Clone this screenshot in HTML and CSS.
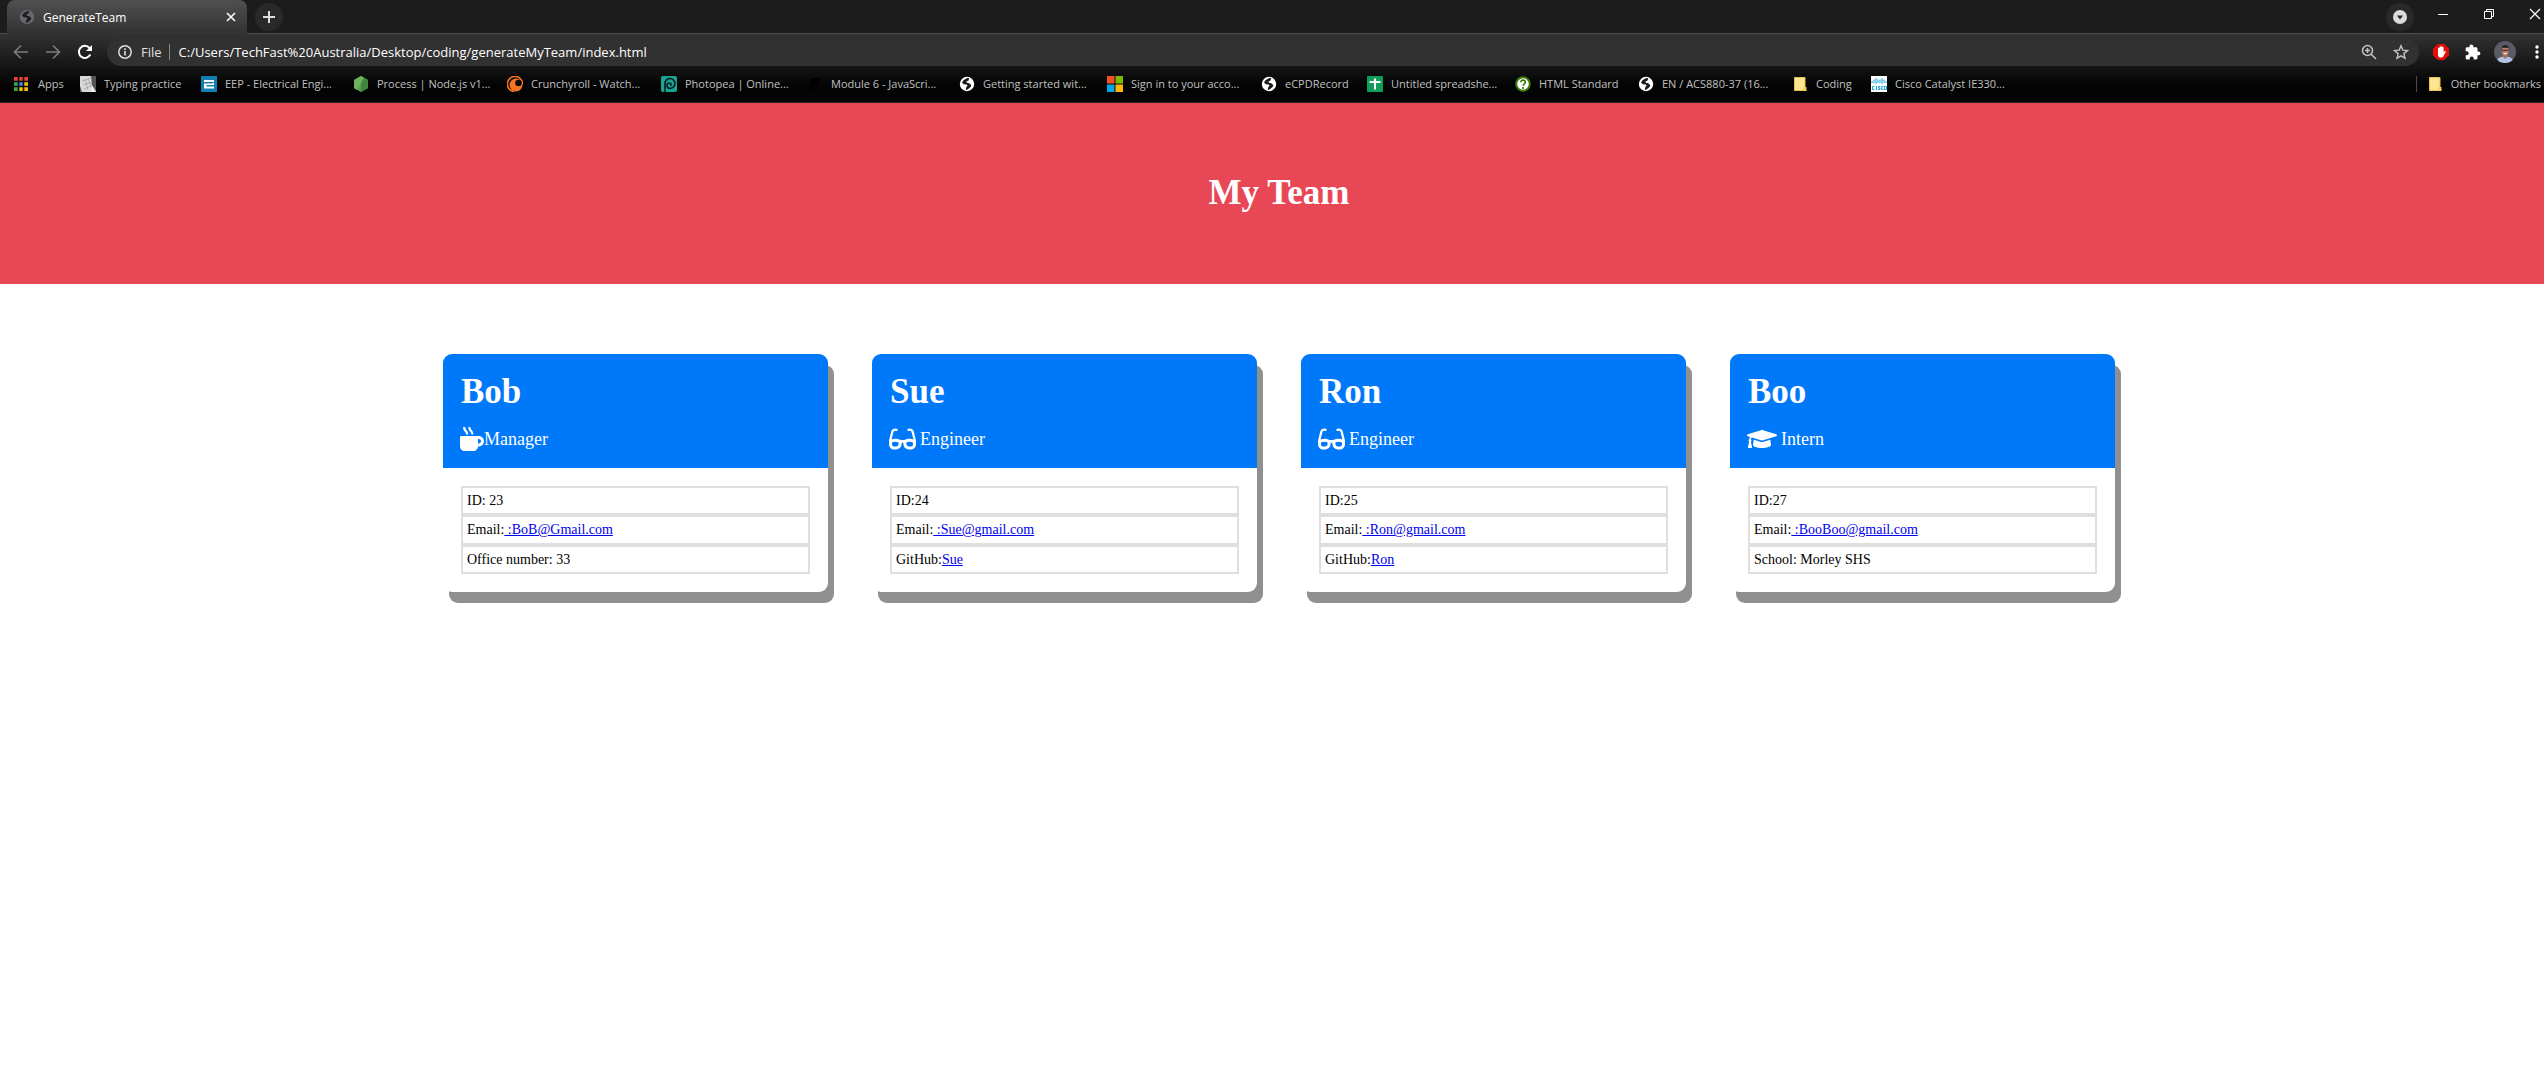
FILE: index.html
```html
<!DOCTYPE html>
<html lang="en">
<head>
<meta charset="utf-8">
<title>GenerateTeam</title>
<link rel="stylesheet" href="styles.css">
</head>
<body>
<svg class="sprite" aria-hidden="true">
  <symbol id="globe" viewBox="0 0 16 16">
    <circle cx="8" cy="8" r="7.200" fill="currentColor"/>
    <path class="land" d="M10.200 2.200 8.200 2 4.500 4.200 3 6.400 4.800 8.200 7.600 8.600 8.600 9.600 7.200 11.200 6.800 14 8.600 13.600 11.600 11 12.400 9.200 10.600 7.400 7.600 6.600 7.400 5.600 9.600 4.600z"/>
  </symbol>
  <symbol id="folder" viewBox="0 0 16 16">
    <path fill="#ffe590" stroke="#e8c34c" d="M2.500 1.500h10.500v13h-10.500z"/>
    <path fill="#f7d15c" d="M11 11h3.500v4H11z"/>
  </symbol>
  <symbol id="glasses" viewBox="0 0 576 512">
    <path fill="currentColor" d="M574.1 280.37L528.75 98.66c-5.91-23.7-21.59-44.05-43-55.81-21.44-11.73-46.97-14.11-70.19-6.33l-15.25 5.08c-8.39 2.79-12.92 11.86-10.12 20.24l5.06 15.18c2.79 8.38 11.85 12.91 20.23 10.12l13.18-4.39c10.87-3.62 23-3.57 33.16 1.73 10.29 5.37 17.57 14.56 20.37 25.82l38.46 153.82c-22.19-6.81-49.79-12.46-81.2-12.46-34.77 0-73.98 7.02-114.85 26.74h-73.18c-40.87-19.74-80.08-26.75-114.86-26.75-31.42 0-59.02 5.65-81.21 12.46l38.46-153.83c2.79-11.25 10.09-20.45 20.38-25.81 10.16-5.3 22.28-5.35 33.15-1.73l13.17 4.39c8.38 2.79 17.44-1.74 20.23-10.12l5.06-15.18c2.8-8.38-1.73-17.45-10.12-20.24l-15.25-5.08c-23.22-7.78-48.75-5.41-70.19 6.33-21.41 11.77-37.09 32.11-43 55.8L1.9 280.37A64.218 64.218 0 0 0 0 295.86v70.25C0 429.01 51.58 480 115.2 480h37.12c60.28 0 110.37-45.94 114.88-105.37l2.93-38.63h35.75l2.93 38.63C313.31 434.06 363.4 480 423.68 480h37.12c63.62 0 115.2-50.99 115.2-113.88v-70.25c0-5.23-.64-10.43-1.9-15.5zm-370.72 89.42c-1.97 25.91-24.4 46.21-51.06 46.21H115.2C86.97 416 64 393.62 64 366.11v-37.54c18.12-6.49 43.42-12.92 72.58-12.92 23.86 0 47.26 4.33 69.93 12.92l-3.13 41.22zM512 366.12c0 27.51-22.97 49.88-51.2 49.88h-37.12c-26.67 0-49.1-20.3-51.06-46.21l-3.13-41.22c22.67-8.59 46.08-12.92 69.95-12.92 29.12 0 54.43 6.44 72.55 12.93v37.54z"/>
  </symbol>
</svg>

<div class="window">
  <div class="tab-strip">
    <div class="tab">
      <svg class="tab-icon"><use href="#globe"/></svg>
      <span class="tab-title">GenerateTeam</span>
      <button class="tab-close" aria-label="Close tab"><svg width="10" height="10" viewBox="0 0 10 10"><path d="M1 1l8 8M9 1L1 9" stroke="#fff" stroke-width="1.600"/></svg></button>
    </div>
    <button class="new-tab" aria-label="New tab"><svg width="12" height="12" viewBox="0 0 12 12"><path d="M6 0v12M0 6h12" stroke="#dcdcdc" stroke-width="2"/></svg></button>
    <button class="tab-search" aria-label="Search tabs"><svg width="14" height="14" viewBox="0 0 14 14"><circle cx="7" cy="7" r="7" fill="#dcdcdc"/><path d="M4 5.500h6L7 9.500z" fill="#222"/></svg></button>
    <div class="window-controls">
      <button aria-label="Minimise"><svg width="12" height="12" viewBox="0 0 12 12"><path d="M1 6.500h10" stroke="#fff"/></svg></button>
      <button aria-label="Restore"><svg width="12" height="12" viewBox="0 0 12 12" fill="none" stroke="#fff"><path d="M1.500 3.500h7v7h-7zM3.500 3.500v-2h7v7h-2"/></svg></button>
      <button aria-label="Close"><svg width="12" height="12" viewBox="0 0 12 12"><path d="M1 1l10 10M11 1L1 11" stroke="#fff" stroke-width="1.200"/></svg></button>
    </div>
  </div>

  <div class="chrome">
    <div class="toolbar">
      <div class="tools">
        <button class="dim" aria-label="Back"><svg width="16" height="16" viewBox="0 0 16 16" fill="none" stroke="currentColor" stroke-width="1.600"><path d="M15 8H2M8 1.500L1.500 8 8 14.500"/></svg></button>
        <button class="dim" aria-label="Forward"><svg width="16" height="16" viewBox="0 0 16 16" fill="none" stroke="currentColor" stroke-width="1.600"><path d="M1 8h13M8 1.500L14.500 8 8 14.500"/></svg></button>
        <button aria-label="Reload"><svg width="16" height="16" viewBox="0 0 16 16"><path d="M13.300 10.500A6 6 0 1 1 12.500 4" fill="none" stroke="#fff" stroke-width="2"/><path d="M15 1v6H9z" fill="#fff"/></svg></button>
      </div>
      <div class="omnibox">
        <svg width="14" height="14" viewBox="0 0 14 14"><circle cx="7" cy="7" r="6.200" fill="none" stroke="#dedede" stroke-width="1.500"/><path d="M7 6v4.500M7 3.300v1.600" stroke="#dedede" stroke-width="1.600"/></svg>
        <label class="scheme" for="address">File</label>
        <input class="address" id="address" type="text" value="C:/Users/TechFast%20Australia/Desktop/coding/generateMyTeam/index.html">
        <div class="tools">
          <button class="soft" aria-label="Zoom"><svg width="16" height="16" viewBox="0 0 16 16" fill="none" stroke="currentColor" stroke-width="1.500"><circle cx="6.500" cy="6.500" r="5"/><path d="M10.200 10.200l4.800 4.800M6.500 4v5M4 6.500h5"/></svg></button>
          <button class="soft" aria-label="Bookmark this page"><svg width="16" height="16" viewBox="0 0 16 16" fill="none" stroke="currentColor" stroke-width="1.400"><path d="M8 1.800l1.800 4.300 4.700.4-3.600 3.100 1.100 4.600L8 11.800l-4 2.400 1.100-4.600L1.500 6.500l4.700-.4z"/></svg></button>
        </div>
      </div>
      <div class="tools">
        <button aria-label="Ad blocker"><svg width="16" height="16" viewBox="0 0 16 16"><path d="M4.700 0h6.600L16 4.700v6.600L11.300 16H4.700L0 11.300V4.700z" fill="#e40d0d"/><path d="M5 8V4.500a.7.7 0 0 1 1.400 0V3.200a.7.7 0 0 1 1.400 0v-.4a.7.7 0 0 1 1.400 0v.8a.7.7 0 0 1 1.400 0V8.500l1-1.300c.7-.6 1.500 0 1.100.8L10.500 12c-.6 1.200-1.400 1.600-2.600 1.600C6 13.600 5 12.400 5 10.500z" fill="#fff"/></svg></button>
        <button aria-label="Extensions"><svg width="16" height="16" viewBox="0 0 16 16"><path d="M13.500 7.500h-1V4.700c0-.8-.6-1.400-1.400-1.400H8.300v-1a1.900 1.900 0 0 0-3.800 0v1H2C1.200 3.300.7 3.900.7 4.700v2.500h1a2 2 0 0 1 0 4h-1V14c0 .8.500 1.400 1.300 1.400h2.700v-1a2 2 0 0 1 4 0v1h2.400c.8 0 1.400-.6 1.400-1.400v-2.700h1a1.900 1.900 0 0 0 0-3.800z" fill="#fff"/></svg></button>
        <button aria-label="Profile"><svg width="22" height="22" viewBox="0 0 22 22"><circle cx="11" cy="11" r="11" fill="#595b66"/><path d="M3.200 18.700c1.300-2.400 4.300-3.200 7.800-3.200s6.500.8 7.800 3.200A11 11 0 0 1 3.200 18.700z" fill="#b4c2e6"/><path d="M9 12h4.500v4L11 18l-2-2z" fill="#a5705a"/><ellipse cx="11.200" cy="9.800" rx="3.700" ry="4.900" fill="#b9806a"/><path d="M7.300 9.500C6.500 3 15.900 2.500 15.200 9l-.8-2.500c-2 .3-4.500.3-6.300 0z" fill="#1c1718"/><path d="M7.800 9.300h6.800" stroke="#2e2223"/><path d="M9.700 12.600h3" stroke="#fff"/></svg></button>
        <button aria-label="Menu"><svg width="4" height="14" viewBox="0 0 4 14" fill="#fff"><circle cx="2" cy="2" r="1.700"/><circle cx="2" cy="7" r="1.700"/><circle cx="2" cy="12" r="1.700"/></svg></button>
      </div>
    </div>

    <nav class="bookmarks" aria-label="Bookmarks">
      <div class="bookmark-list">
        <a class="bookmark" href="#apps"><svg viewBox="0 0 16 16"><path d="M0 1h4v4H0zM5 1h4v4H5zM10 1h4v4h-4z" fill="#ea4335"/><path d="M0 6h4v4H0zM0 11h4v4H0z" fill="#34a853"/><path d="M5 6h4v4H5z" fill="#4285f4"/><path d="M5 11h4v4H5zM10 6h4v4h-4zM10 11h4v4h-4z" fill="#fbbc05"/><path d="M4.500 0v16M9.500 0v16M0 5.500h14M0 10.500h14" stroke="#0a0a0a" stroke-width="1.600"/></svg>Apps</a>
        <a class="bookmark" href="#typing"><svg viewBox="0 0 16 16"><path d="M0 0h16v16H0z" fill="#d9d9d9"/><path d="M11 0h5v16l-4-6z" fill="#555"/><path d="M0 10l2 6H0z" fill="#555"/><path d="M2 5l9-3M3 9l9-3M4 13l7-3M5 3l3 11M8 2l3 9" fill="none" stroke="#a5a5a5" stroke-width=".800"/><path d="M12 9l4 7h-5z" fill="#eee"/></svg>Typing practice</a>
        <a class="bookmark" href="#eep"><svg viewBox="0 0 16 16"><rect width="16" height="16" rx="1" fill="#137fb0"/><path d="M3 4h10v2H3zM3 7.500h8l2-1v2.500H6l-1 1.500h8v2H3z" fill="#fff"/></svg>EEP - Electrical Engi...</a>
        <a class="bookmark" href="#node"><svg viewBox="0 0 16 16"><path d="M8 0l7 4v8l-7 4-7-4V4z" fill="#5fa04e"/><path d="M8 0l7 4v8l-7 4z" fill="#3f873f"/><path d="M1 4l7-4 3 2-7 12-3-2z" fill="#6cb35c"/></svg>Process | Node.js v1...</a>
        <a class="bookmark" href="#crunchyroll"><svg viewBox="0 0 16 16"><path d="M15.500 9A7.600 7.600 0 1 0 7 15.600" fill="none" stroke="#f47521" stroke-width="1.600"/><circle cx="9" cy="9" r="6.500" fill="#f47521"/><circle cx="11.500" cy="7" r="3.300" fill="#0a0a0a"/></svg>Crunchyroll - Watch...</a>
        <a class="bookmark" href="#photopea"><svg viewBox="0 0 16 16"><rect width="16" height="16" rx="2" fill="#18a497"/><path d="M4 16V8a5 5 0 1 1 5 4.500c-3.500 0-4-5-1-5.500 2.500-.2 2.500 2.500 1 2.500" fill="none" stroke="#0c1f1d" stroke-width="1.700"/></svg>Photopea | Online...</a>
        <a class="bookmark" href="#module"><svg viewBox="0 0 16 16"><path d="M4 2h9l-2 12H2z" fill="#000"/></svg>Module 6 - JavaScri...</a>
        <a class="bookmark" href="#started"><svg><use href="#globe"/></svg>Getting started wit...</a>
        <a class="bookmark" href="#signin"><svg viewBox="0 0 16 16"><path d="M0 0h7.500v7.500H0z" fill="#f25022"/><path d="M8.500 0H16v7.500H8.500z" fill="#7fba00"/><path d="M0 8.500h7.500V16H0z" fill="#00a4ef"/><path d="M8.500 8.500H16V16H8.500z" fill="#ffb900"/></svg>Sign in to your acco...</a>
        <a class="bookmark" href="#ecpd"><svg><use href="#globe"/></svg>eCPDRecord</a>
        <a class="bookmark" href="#sheet"><svg viewBox="0 0 16 16"><rect width="16" height="16" rx="1" fill="#0f9d58"/><path d="M8 2.500v11M2.500 6h11" stroke="#fff" stroke-width="2"/></svg>Untitled spreadshe...</a>
        <a class="bookmark" href="#html"><svg viewBox="0 0 16 16"><circle cx="8" cy="8" r="6.800" fill="#fff" stroke="#3c790a" stroke-width="2"/><path d="M5.800 6.300c0-3 4.600-2.800 4.500 0 0 1.600-2.200 1.600-2.200 3.500M8 11v2" fill="none" stroke="#3c790a" stroke-width="1.700"/></svg>HTML Standard</a>
        <a class="bookmark" href="#acs880"><svg><use href="#globe"/></svg>EN / ACS880-37 (16...</a>
        <a class="bookmark" href="#coding"><svg><use href="#folder"/></svg>Coding</a>
        <a class="bookmark" href="#cisco"><svg viewBox="0 0 16 16"><path d="M0 0h16v16H0z" fill="#fff"/><path d="M1 5v2M3 3.500V7M5 2v6M7 3.500V7M9 3.500V7M11 2v6M13 3.500V7M15 5v2M3.500 10.500H1.500v3h2M5.500 10v4M9.300 10.500H7.500V12h1.500v1.500H7M12.500 10.500h-1.800v3h1.800M13.500 10.500h2v3h-2z" fill="none" stroke="#1ba0d7"/></svg>Cisco Catalyst IE330...</a>
      </div>
      <a class="bookmark other" href="#other"><svg><use href="#folder"/></svg>Other bookmarks</a>
    </nav>
  </div>

  <header class="banner"><h1>My Team</h1></header>

  <main class="team">
    <article class="card">
      <div class="card-head">
        <h2>Bob</h2>
        <p class="role"><svg width="24" height="24" viewBox="0 0 512 512"><path fill="currentColor" d="M127.1 146.5c1.3 7.7 8 13.5 16 13.5h16.5c9.8 0 17.600-8.500 16.300-18-3.800-28.200-16.400-54.200-36.600-74.700-14.400-14.700-23.600-33.300-26.400-53.500C111.800 5.900 105 0 96.800 0H80.400C70.600 0 63 8.500 64.100 18c3.900 31.900 18 61.300 40.600 84.400 12 12.200 19.700 27.500 22.400 44.100zm112 0c1.300 7.700 8 13.500 16 13.500h16.500c9.800 0 17.600-8.500 16.300-18-3.800-28.200-16.400-54.200-36.600-74.700-14.400-14.700-23.600-33.300-26.400-53.500C223.800 5.900 217 0 208.800 0h-16.400c-9.800 0-17.500 8.500-16.300 18 3.900 31.900 18 61.300 40.600 84.400 12 12.200 19.700 27.500 22.400 44.100zM400 192H32c-17.700 0-32 14.300-32 32v192c0 53 43 96 96 96h192c53 0 96-43 96-96h16c61.800 0 112-50.200 112-112s-50.200-112-112-112zm0 160h-16v-96h16c26.500 0 48 21.500 48 48s-21.500 48-48 48z"/></svg>Manager</p>
      </div>
      <ul class="details">
        <li>ID: 23</li>
        <li>Email:<a href="mailto:BoB@Gmail.com"> :BoB@Gmail.com</a></li>
        <li>Office number: 33</li>
      </ul>
    </article>

    <article class="card">
      <div class="card-head">
        <h2>Sue</h2>
        <p class="role spaced"><svg width="27" height="24"><use href="#glasses"/></svg>Engineer</p>
      </div>
      <ul class="details">
        <li>ID:24</li>
        <li>Email:<a href="mailto:Sue@gmail.com"> :Sue@gmail.com</a></li>
        <li>GitHub:<a href="https://github.com/Sue">Sue</a></li>
      </ul>
    </article>

    <article class="card">
      <div class="card-head">
        <h2>Ron</h2>
        <p class="role spaced"><svg width="27" height="24"><use href="#glasses"/></svg>Engineer</p>
      </div>
      <ul class="details">
        <li>ID:25</li>
        <li>Email:<a href="mailto:Ron@gmail.com"> :Ron@gmail.com</a></li>
        <li>GitHub:<a href="https://github.com/Ron">Ron</a></li>
      </ul>
    </article>

    <article class="card">
      <div class="card-head">
        <h2>Boo</h2>
        <p class="role spaced"><svg width="30" height="24" viewBox="0 0 640 512"><path fill="currentColor" d="M622.34 153.2L343.4 67.5c-15.2-4.67-31.6-4.67-46.79 0L17.66 153.2c-23.54 7.23-23.54 38.36 0 45.59l48.63 14.94c-10.67 13.19-17.23 29.28-17.88 46.9C38.78 266.15 32 276.11 32 288c0 10.78 5.68 19.85 13.86 25.65L20.33 428.53C18.11 438.52 25.71 448 35.94 448h56.11c10.24 0 17.84-9.48 15.62-19.47L82.14 313.65C90.32 307.85 96 298.78 96 288c0-11.57-6.47-21.25-15.66-26.87.76-15.02 8.44-28.3 20.69-36.72L296.6 284.5c9.06 2.78 26.44 6.25 46.79 0l278.95-85.7c23.55-7.24 23.55-38.36 0-45.6zM352.79 315.09c-28.53 8.76-52.84 3.92-65.59 0l-145.02-44.55L128 384c0 35.35 85.96 64 192 64s192-28.65 192-64l-14.18-113.47-145.03 44.56z"/></svg>Intern</p>
      </div>
      <ul class="details">
        <li>ID:27</li>
        <li>Email:<a href="mailto:BooBoo@gmail.com"> :BooBoo@gmail.com</a></li>
        <li>School: Morley SHS</li>
      </ul>
    </article>
  </main>
</div>
</body>
</html>
```
FILE: styles.css
```css
* {
  box-sizing: border-box;
}

body {
  margin: 0;
  background: #fff;
  font-family: "Liberation Serif", "Times New Roman", serif;
  overflow-x: hidden;
}

button {
  display: flex;
  align-items: center;
  justify-content: center;
  margin: 0;
  padding: 0;
  border: 0;
  background: none;
  color: #fff;
}

svg {
  flex: none;
}

.sprite {
  display: none;
}

/* The window runs slightly past the right edge of the screen */
.window {
  width: calc(100% + 14px);
}

/* Tab strip */
.tab-strip {
  display: flex;
  align-items: center;
  height: 34px;
  padding-left: 7px;
  background: linear-gradient(#4d4d4d, #4d4d4d) bottom / 100% 1px no-repeat #1c1c1c;
  font: 12px "Open Sans", "Noto Sans", sans-serif;
}

.tab {
  display: flex;
  align-items: center;
  align-self: stretch;
  width: 240px;
  padding: 0 11px 0 12px;
  border-radius: 8px 8px 0 0;
  background: linear-gradient(#505050, #323232);
  color: #fff;
}

.tab-icon {
  width: 16px;
  height: 16px;
  margin-right: 8px;
  color: #6a6e73;
}

.tab-title {
  flex: 1;
}

.tab-close {
  width: 10px;
  height: 16px;
}

.new-tab,
.tab-search {
  width: 28px;
  height: 28px;
  border-radius: 14px;
  background: #292929;
}

.new-tab {
  margin-left: 8px;
}

.tab-search {
  margin-left: auto;
}

.window-controls {
  display: flex;
  align-self: flex-start;
  margin-left: 6px;
}

.window-controls button {
  width: 46px;
  height: 28px;
}

/* Toolbar and bookmarks */
.chrome {
  border-bottom: 1px solid #242424;
  background: linear-gradient(#323232, #040404 75%);
  font: 12px "Open Sans", "Noto Sans", sans-serif;
}

.toolbar {
  display: flex;
  align-items: center;
  gap: 6px;
  height: 36px;
  padding: 0 5px;
}

.tools {
  display: flex;
}

.tools button {
  width: 32px;
  height: 28px;
}

.tools .dim {
  color: #7d7d7d;
}

.tools .soft {
  color: #c4c4c4;
}

.omnibox {
  display: flex;
  flex: 1;
  align-items: center;
  height: 28px;
  padding: 0 2px 0 11px;
  border-radius: 14px;
  background: #313131;
  color: #fff;
  font-size: 13px;
}

.scheme {
  margin-left: 9px;
  padding-right: 7px;
  border-right: 1px solid #8a8a8a;
  color: #e0e0e0;
  line-height: 16px;
}

.address {
  flex: 1;
  min-width: 0;
  padding: 0 0 0 9px;
  border: 0;
  background: none;
  color: #fff;
  font: inherit;
  line-height: 20px;
}

.bookmarks {
  display: flex;
  justify-content: space-between;
  height: 32px;
  padding: 0 0 5px 14px;
  overflow: hidden;
}

.bookmark-list {
  display: grid;
  grid-template-columns: 66px 121px 152px 154px 154px 146px 152px 148px 154px 106px 148px 123px 154px 79px 140px;
}

.bookmark {
  display: flex;
  align-items: center;
  gap: 8px;
  color: #c0c0c0;
  font-size: 11px;
  text-decoration: none;
  white-space: nowrap;
}

.bookmark svg {
  width: 16px;
  height: 16px;
  color: #fff;
}

.land {
  fill: #1b1b1b;
}

.tab-icon {
  opacity: 0.9;
}

.other {
  align-self: center;
  padding: 0 17px 0 10px;
  border-left: 1px solid #4a4a4a;
}

/* Page */
.banner {
  padding: 70px 0;
  background: #e84756;
  color: #fff;
  text-align: center;
}

h1,
h2 {
  margin: 0;
  font-size: 35px;
}

h1 {
  line-height: 40px;
  padding-bottom: 1px;
}

h2 {
  padding-left: 1px;
  line-height: 39px;
}

.team {
  display: flex;
  flex-wrap: wrap;
  justify-content: center;
  gap: 44px;
  padding: 70px 0;
}

.card {
  width: 385px;
  border-radius: 9px;
  background: #fff;
  box-shadow: 6px 11px #909090;
}

.card-head {
  padding: 18px 17px 17px;
  border-radius: 9px 9px 0 0;
  background: #0078fa;
  color: #fff;
}

.role {
  display: flex;
  margin: 16px 0 0;
  font-size: 18px;
  line-height: 24px;
}

.spaced {
  gap: 4px;
}

.details {
  display: flex;
  flex-direction: column;
  min-height: 124px;
  margin: 0;
  padding: 18px;
  list-style: none;
  font-size: 14px;
}

.details li {
  flex: 1;
  padding: 0 4px;
  border: 2px solid #dfdfdf;
  line-height: 25px;
}

.details a {
  color: #00e;
}
```
